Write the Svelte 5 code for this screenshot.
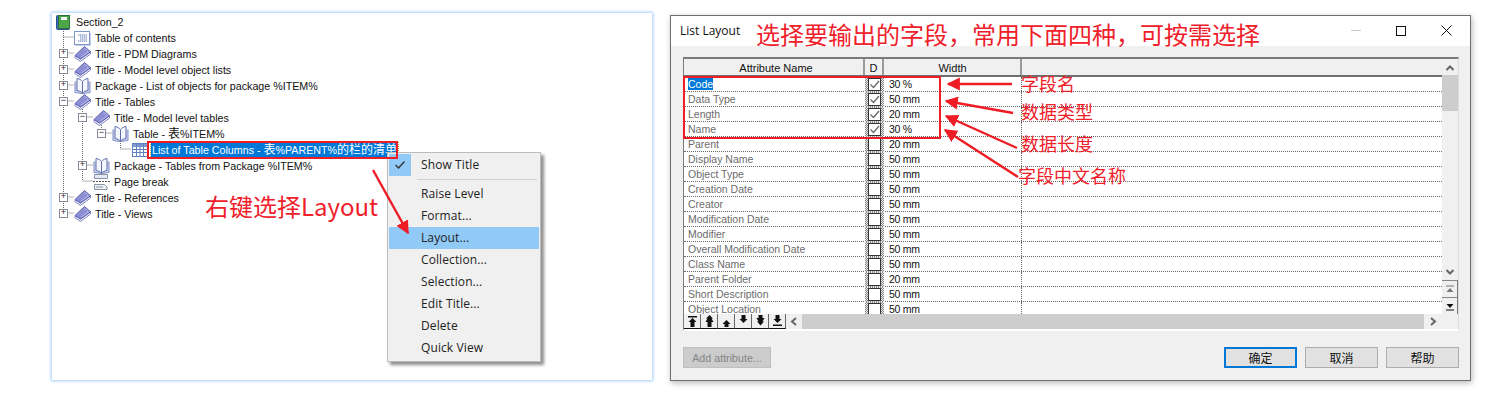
<script>
  const tree = [
    { t: 'Section_2', d: 0, i: 'sec' },
    { t: 'Table of contents', d: 1, i: 'toc' },
    { t: 'Title - PDM Diagrams', d: 1, i: 'title', e: '+' },
    { t: 'Title - Model level object lists', d: 1, i: 'title', e: '+' },
    { t: 'Package - List of objects for package %ITEM%', d: 1, i: 'pkg', e: '+' },
    { t: 'Title - Tables', d: 1, i: 'title', e: '-' },
    { t: 'Title - Model level tables', d: 2, i: 'title', e: '-' },
    { t: 'Table - 表%ITEM%', d: 3, i: 'pkg', e: '-' },
    { t: 'List of Table Columns - 表%PARENT%的栏的清单', d: 4, i: 'grid', sel: true },
    { t: 'Package - Tables from Package %ITEM%', d: 2, i: 'pkg', e: '+' },
    { t: 'Page break', d: 2, i: 'brk' },
    { t: 'Title - References', d: 1, i: 'title', e: '+' },
    { t: 'Title - Views', d: 1, i: 'title', e: '+' }
  ];
  const parts = (s) => s.split(/([\u4e00-\u9fff]+)/).filter(Boolean).map((x) => ({ x, cjk: /[\u4e00-\u9fff]/.test(x) }));
  const menu = ['Raise Level', 'Format...', 'Layout...', 'Collection...', 'Selection...', 'Edit Title...', 'Delete', 'Quick View'];
  const rows = [
    ['Code', '30 %', 1], ['Data Type', '50 mm', 1], ['Length', '20 mm', 1], ['Name', '30 %', 1],
    ['Parent', '20 mm', 0], ['Display Name', '50 mm', 0], ['Object Type', '50 mm', 0], ['Creation Date', '50 mm', 0],
    ['Creator', '50 mm', 0], ['Modification Date', '50 mm', 0], ['Modifier', '50 mm', 0],
    ['Overall Modification Date', '50 mm', 0], ['Class Name', '50 mm', 0], ['Parent Folder', '20 mm', 0],
    ['Short Description', '50 mm', 0], ['Object Location', '50 mm', 0]
  ];
  const tools = [
    'M3 2h9v1.500H3ZM7.500 4 11.500 8H9.500v5h-4V8h-2Z',
    'M7.500 1 11 4.500H9.500L11.500 8H9.500v5h-4V8h-2L5.500 4.500H4Z',
    'M7.500 6 11.500 10H9.500v3h-4v-3h-2Z',
    'M5.500 1h4v4h2L7.500 9l-4-4h2Z',
    'M5.500 1h4v3h2L9.500 7.500H11L7.500 11.500 4 7.500h1.500L3.500 4h2Z',
    'M5.500 1h4v4h2L7.500 9l-4-4h2ZM3 10.500h9V12H3Z'
  ];
</script>

{#snippet icon(k)}
  {#if k === 'sec'}
    <svg class="ico sec" width="14" height="15" viewBox="0 0 14 15">
      <rect x=".5" y=".5" width="13" height="14" rx="1" fill="#3b6fc4" stroke="#2a4f8f" />
      <rect x="2.500" y=".5" width="11" height="13" fill="#4da64a" stroke="#2f6d3a" />
      <rect x="5" y="2" width="6" height="3" fill="#eef7ea" />
    </svg>
  {:else if k === 'toc'}
    <svg class="ico" width="17" height="15" viewBox="0 0 17 15">
      <rect x=".5" y=".5" width="15" height="13" fill="#fff" stroke="#7d97c9" />
      <path d="M1 14.500h16M16.500 2v13" stroke="#c5d2ea" />
      <path d="M4 4h9M6 6h7M6 8h7M4 10h9" stroke="#5f7fc0" stroke-dasharray="1.500 .5" />
    </svg>
  {:else if k === 'title'}
    <svg class="ico" width="17" height="16" viewBox="0 0 17 16">
      <path d="M1 9.500v2.300L6.500 15.500 16.500 8V5.800L6.500 13Z" fill="#eeeefa" stroke="#7478bd" stroke-width=".9" />
      <path d="M10.500.5 16.500 5.800 6.500 13 1 9.500Z" fill="#8c8fd6" stroke="#5d62a8" />
      <path d="M10.500 2.200 14.500 5.800 7 11" fill="none" stroke="#b7b9ea" />
    </svg>
  {:else if k === 'pkg'}
    <svg class="ico" width="17" height="16" viewBox="0 0 17 16">
      <path d="M1 3.500v11l7.500 1 7.500-1v-11" fill="#cfd6ee" stroke="#7f8dc4" />
      <path d="M8.500 3.500C7 1.800 5.300.8 3 .5v12c2.300.3 4 1.200 5.500 2.800 1.500-1.600 3.200-2.500 5.500-2.800V.5C11.700.8 10 1.800 8.500 3.500Z" fill="#f4f6fd" stroke="#5e6cad" />
      <path d="M8.500 3.500v11.500" stroke="#5e6cad" />
    </svg>
  {:else if k === 'grid'}
    <svg class="ico" width="17" height="14" viewBox="0 0 17 14">
      <rect x="1.500" y=".5" width="15" height="13" fill="#fff" stroke="#5f7fc0" />
      <rect x="2" y="1" width="14" height="3" fill="#7f9ad2" />
      <path d="M2 6.500h14M2 9.500h14M5.500 1v12M9 1v12M12.500 1v12" stroke="#5f7fc0" />
    </svg>
  {:else}
    <svg class="ico" width="17" height="16" viewBox="0 0 17 16">
      <path d="M1.500.5h13v4h-13Z" fill="#e4e8f2" stroke="#8a93a6" />
      <path d="M0 7.500h17" stroke="#555" stroke-dasharray="2 1" />
      <path d="M1.500 10.500h10l2.500 2.500v2.500H1.500Z" fill="#eef1f7" stroke="#8a93a6" />
      <path d="M3 13h7" stroke="#8a93a6" />
    </svg>
  {/if}
{/snippet}

<div class="page">
  <section class="tree-panel">
    <svg class="lines" width="110" height="210" viewBox="0 0 110 210">
      <path d="M11.500 16V200M11.500 24H22M11.500 40H22M11.500 56H22M11.500 72H22M11.500 88H22M11.500 184H22M11.500 200H22M30.500 92V168M30.500 104H41M30.500 152H41M30.500 168H41M49.500 108V120H60M68.500 124V136H79" fill="none" stroke="#666" stroke-dasharray="1 1" />
    </svg>
    <ul class="tree">
      {#each tree as r}
        <li class="node" style={`padding-left:${r.d === 0 ? 4 : 22 + (r.d - 1) * 19}px`}>
          {#if r.e}
            <span class="exp" style={`left:${7 + (r.d - 1) * 19}px`}>{r.e === '+' ? '+' : '−'}</span>
          {/if}
          {@render icon(r.i)}
          <span class="lbl" class:sel={r.sel}>{#each parts(r.t) as p}{#if p.cjk}<span class="cjk">{p.x}</span>{:else}{p.x}{/if}{/each}</span>
        </li>
      {/each}
    </ul>

    <div class="menu">
      <div class="mi first"><span class="check"><svg width="12" height="10" viewBox="0 0 12 10"><path d="M1.500 5 4.500 8 10.500 1.500" fill="none" stroke="#333" stroke-width="1.400" /></svg></span>Show Title</div>
      <div class="sep"></div>
      {#each menu as m}
        <div class="mi" class:hot={m === 'Layout...'}>{m}</div>
      {/each}
    </div>
  </section>

  <section class="dialog">
    <header class="title-bar">
      <span class="caption">List Layout</span>
      <div class="win">
        <span class="min"></span>
        <span class="max"></span>
        <svg width="11" height="11" viewBox="0 0 11 11"><path d="M.5.5l10 10M10.500.5l-10 10" stroke="#111" fill="none" /></svg>
      </div>
    </header>
    <div class="body">
      <div class="grid">
        <div class="table">
          <div class="thead">
            <div class="th c1">Attribute Name</div>
            <div class="th c2">D</div>
            <div class="th c3">Width</div>
            <div class="th c4"></div>
          </div>
          <div class="tbody">
            {#each rows as r, i}
              <div class="tr">
                <div class="td c1 name" class:dark={i === 0}><span class:hl={i === 0}>{r[0]}</span></div>
                <div class="td c2 chk">
                  <span class="box">
                    {#if r[2]}<svg width="11" height="11" viewBox="0 0 11 11"><path d="M1.500 5.500 4.500 8.500 10 2" fill="none" stroke="#666" stroke-width="1.300" /></svg>{/if}
                  </span>
                </div>
                <div class="td c3 w">{r[1]}</div>
                <div class="td c4"></div>
              </div>
            {/each}
          </div>
          <div class="hbar">
            {#each tools as d}
              <span class="tool"><svg width="15" height="14" viewBox="0 0 15 14"><path {d} fill="#111" /></svg></span>
            {/each}
            <svg class="arr" width="16" height="15" viewBox="0 0 16 15"><path d="M10 4 6 7.500 10 11" fill="none" stroke="#666" stroke-width="2" /></svg>
            <span class="hthumb"></span>
            <svg class="arr" width="18" height="15" viewBox="0 0 18 15"><path d="M7 4 11 7.500 7 11" fill="none" stroke="#666" stroke-width="2" /></svg>
          </div>
        </div>
        <div class="vbar">
          <svg class="up" width="16" height="16" viewBox="0 0 16 16"><path d="M4.500 11 8 7.500 11.500 11" fill="none" stroke="#666" stroke-width="2" /></svg>
          <span class="vthumb"></span>
          <span class="vspace"></span>
          <svg class="up" width="16" height="13" viewBox="0 0 16 13"><path d="M4.500 3 8 6.500 11.500 3" fill="none" stroke="#666" stroke-width="2" /></svg>
          <span class="vbtn"><svg width="14" height="14" viewBox="0 0 14 14"><path d="M3 4h8" stroke="#777" /><path d="M3.500 10 7 6l3.500 4Z" fill="#777" /></svg></span>
          <span class="vbtn"><svg width="14" height="14" viewBox="0 0 14 14"><path d="M3 11h8" stroke="#111" /><path d="M3.500 5 7 9l3.500-4Z" fill="#111" /></svg></span>
          <span class="vrest"></span>
        </div>
      </div>
      <div class="actions">
        <button class="add">Add attribute...</button>
        <span class="spacer"></span>
        <button class="btn primary">确定</button>
        <button class="btn">取消</button>
        <button class="btn">帮助</button>
      </div>
    </div>
  </section>

  <div class="red-box tree-box"></div>
  <div class="red-box grid-box"></div>
  <svg class="arrows" width="1504" height="403" viewBox="0 0 1504 403">
    <defs>
      <marker id="ah" viewBox="0 0 10 10" refX="9" refY="5" markerWidth="5.500" markerHeight="5.500" orient="auto-start-reverse">
        <path d="M0 0 10 5 0 10Z" fill="#ee1c25" />
      </marker>
    </defs>
    <g stroke="#ee1c25" stroke-width="2.400" fill="none">
      <path d="M373 170 408 233" marker-end="url(#ah)" />
      <path d="M1012 84H948" marker-end="url(#ah)" />
      <path d="M1013 113 946 101" marker-end="url(#ah)" />
      <path d="M1017 148 946 116" marker-end="url(#ah)" />
      <path d="M1018 177 945 130" marker-end="url(#ah)" />
    </g>
  </svg>
  <span class="note n-title">选择要输出的字段，常用下面四种，可按需选择</span>
  <span class="note n-right">右键选择Layout</span>
  <span class="note small n1">字段名</span>
  <span class="note small n2">数据类型</span>
  <span class="note small n3">数据长度</span>
  <span class="note small n4">字段中文名称</span>
</div>

<style>
  :global(body) { margin: 0; background: #fff; }
  .page {
    position: relative; width: 1504px; height: 403px; overflow: hidden;
    display: flex; align-items: flex-start; background: #fff;
    font-family: "Liberation Sans", "Noto Sans CJK SC", sans-serif;
  }
  .tree-panel {
    position: relative; box-sizing: border-box; width: 600px; height: 367px;
    margin: 13px 0 0 52px; background: #fff;
    box-shadow: 0 0 3px 1px #a3ccf6;
  }
  .lines { position: absolute; left: 0; top: 0; }
  .tree { list-style: none; margin: 1px 0 0 0; padding: 0; position: relative; }
  .node {
    position: relative; height: 16px; display: flex; align-items: center; gap: 3px;
    font-size: 10.700px; color: #111; white-space: nowrap;
  }
  .ico { flex: none; }
  .sec { margin-right: 2px; }
  .lbl { line-height: 15px; padding: 0 1px; }
  .cjk { font-size: 12px; line-height: 12px; }
  .lbl.sel { background: #0078d7; color: #fff; outline: 1px dotted #c9a23a; outline-offset: 0; }
  .exp {
    position: absolute; top: 3px; box-sizing: border-box; width: 9px; height: 9px;
    background: #fff; border: 1px solid #8a8a9a; font: 9px/7px "Liberation Mono", monospace;
    text-align: center; color: #222;
  }
  .menu {
    position: absolute; left: 335px; top: 139px; box-sizing: border-box; width: 154px; height: 210px;
    background: #f0f0f0; border: 1px solid #bcbcbc; box-shadow: 3px 3px 3px #8e8e8e; padding: 1px;
    font: 12px "Open Sans", sans-serif; color: #222; letter-spacing: .1px;
  }
  .mi { height: 22px; line-height: 22px; padding-left: 32px; position: relative; }
  .mi.hot { background: #91c9f7; }
  .check {
    position: absolute; left: 0; top: 0; width: 22px; height: 22px; background: #91c9f7;
    display: flex; align-items: center; justify-content: center;
  }
  .sep { height: 1px; background: #d0d0d0; margin: 3px 2px 3px 28px; }
  .dialog {
    box-sizing: border-box; width: 801px; height: 366px; margin: 15px 0 0 18px;
    border: 1px solid #6e6e6e; background: #f0f0f0; box-shadow: 1px 2px 6px #b8b8b8;
    display: flex; flex-direction: column;
  }
  .title-bar { height: 30px; box-sizing: border-box; background: #fff; display: flex; align-items: center; padding: 0 0 1px 9px; flex: none; }
  .caption { font: 12px "Open Sans", sans-serif; color: #111; }
  .win { margin-left: auto; display: flex; align-items: center; gap: 0; height: 100%; }
  .win > * { flex: none; }
  .min { width: 10px; height: 1px; background: #ccc; margin-right: 35px; }
  .max { width: 8px; height: 8px; border: 1px solid #111; margin-right: 35px; }
  .win svg { margin-right: 18px; }
  .body { flex: 1; display: flex; flex-direction: column; padding: 11px 11px 0 12px; min-height: 0; }
  .grid {
    height: 274px; box-sizing: border-box; display: flex; background: #fff;
    border-top: 2px solid #7b7b7b; border-left: 1px solid #7b7b7b; border-right: 1px solid #ddd; border-bottom: 2px solid #fff;
  }
  .table { flex: 1; display: flex; flex-direction: column; min-width: 0; }
  .thead { height: 16px; display: flex; background: #f0f0f0; border-bottom: 2px solid #6f6f6f; flex: none; }
  .th { font-size: 11px; line-height: 18px; text-align: center; color: #111; box-sizing: border-box; border-right: 2px solid #9a9a9a; }
  .c1 { width: 181px; flex: none; box-sizing: border-box; }
  .c2 { width: 19px; flex: none; box-sizing: border-box; }
  .c3 { width: 138px; flex: none; box-sizing: border-box; }
  .c4 { flex: 1; }
  .th.c4 { border-right: 0; }
  .th.c1 { padding-left: 5px; }
  .th.c3 { padding-left: 1px; }
  .tbody { flex: 1; overflow: hidden; min-height: 0; }
  .tr { height: 15px; display: flex; box-sizing: border-box; border-bottom: 1px dotted #666; }
  .td { height: 14px; line-height: 14px; font-size: 10.500px; white-space: nowrap; }
  .name { padding-left: 4px; color: #6b6b6b; }
  .name.dark { color: #fff; }
  .hl { background: #0078d7; }
  .chk {
    height: 15px; display: flex; justify-content: center; align-items: flex-start;
    background: repeating-conic-gradient(#8a8a8a 0 25%, #e8e8e8 0 50%) 0 0 / 2px 2px;
  }
  .box { box-sizing: border-box; width: 13px; height: 13px; margin-top: 1px; background: #fff; border: 1px solid #333; display: flex; align-items: center; justify-content: center; }
  .w { padding-left: 5px; color: #111; border-right: 1px dotted #666; letter-spacing: -.3px; }
  .hbar { height: 15px; flex: none; background: #f0f0f0; display: flex; align-items: stretch; }
  .tool { width: 17px; box-sizing: border-box; background: #f0f0f0; border-right: 1px solid #666; border-bottom: 1px solid #111; display: flex; align-items: center; justify-content: center; }
  .arr { flex: none; }
  .hthumb { flex: 1; background: #cdcdcd; }
  .vbar { width: 16px; flex: none; background: #f0f0f0; display: flex; flex-direction: column; }
  .vthumb { height: 36px; background: #cdcdcd; flex: none; }
  .up { flex: none; }
  .vspace { flex: 1; }
  .vbtn { height: 17px; flex: none; box-sizing: border-box; border-top: 1px solid #888; border-right: 1px solid #777; background: #f0f0f0; display: flex; align-items: center; justify-content: center; }
  .vrest { height: 15px; flex: none; }
  .actions { display: flex; align-items: flex-start; gap: 8px; margin-top: 16px; }
  .spacer { flex: 1; }
  button { height: 21px; box-sizing: border-box; padding: 0; background: #e1e1e1; border: 1px solid #adadad; font: 12px "Noto Sans CJK SC", sans-serif; color: #111; }
  .btn { width: 73px; }
  .primary { border: 2px solid #0078d7; }
  .add { width: 88px; background: #ccc; border-color: #bfbfbf; color: #858585; font: 10.700px "Liberation Sans", sans-serif; }
  .red-box { position: absolute; box-sizing: border-box; border: 2px solid #ee1c25; pointer-events: none; }
  .tree-box { left: 147px; top: 141px; width: 251px; height: 18px; }
  .grid-box { left: 683px; top: 76px; width: 258px; height: 63px; }
  .arrows { position: absolute; left: 0; top: 0; pointer-events: none; }
  .note { position: absolute; color: #f0202a; font: 400 24px/30px "Noto Sans CJK SC", sans-serif; white-space: nowrap; }
  .small { font-size: 18px; line-height: 24px; }
  .n-title { left: 756px; top: 19px; }
  .n-right { left: 205px; top: 191px; }
  .n1 { left: 1021px; top: 71px; }
  .n2 { left: 1021px; top: 99px; }
  .n3 { left: 1021px; top: 131px; }
  .n4 { left: 1018px; top: 163px; }
</style>
